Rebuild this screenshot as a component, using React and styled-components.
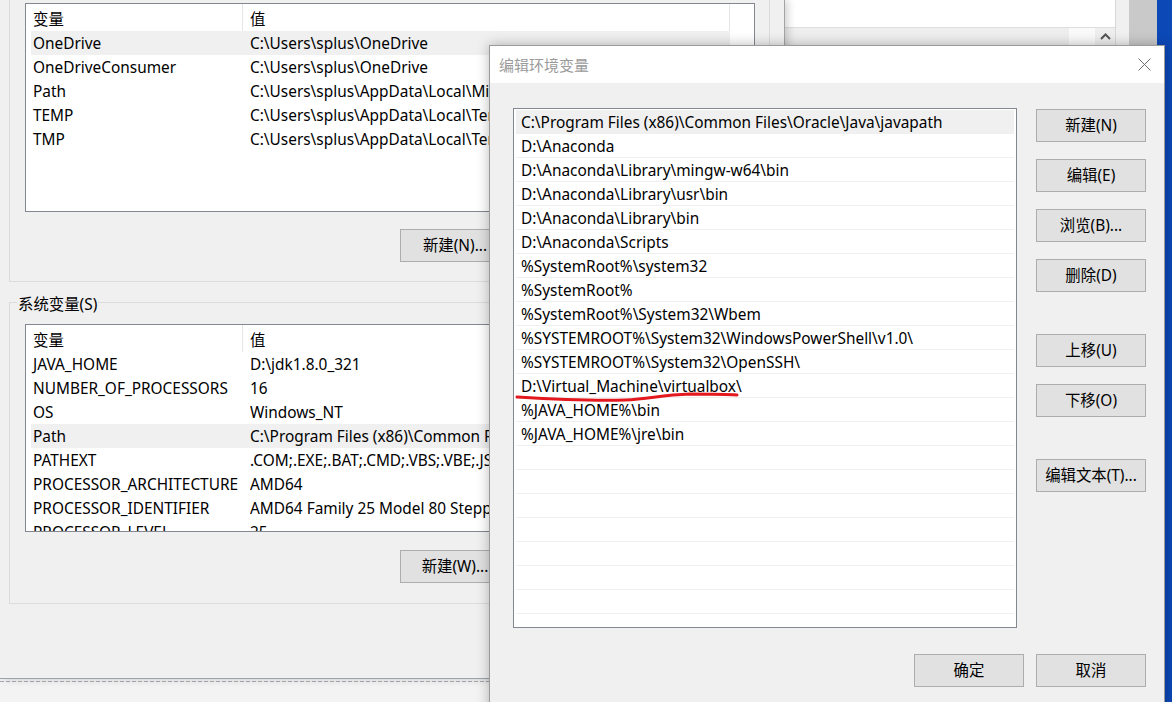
import React from "react";
import styled, { createGlobalStyle } from "styled-components";

const GlobalStyle = createGlobalStyle`
  html, body { margin: 0; padding: 0; }
  body {
    width: 1172px;
    height: 702px;
    overflow: hidden;
    font-family: "Noto Sans", "Noto Sans CJK SC", sans-serif;
    font-size: 15.4px;
    color: #000;
  }
  * { box-sizing: border-box; }
`;

const Desktop = styled.div`
  position: relative;
  width: 1172px;
  height: 702px;
  overflow: hidden;
  background: #0c48b6;
`;

/* window partly hidden behind the others, top right */
const BackWindow = styled.div`
  position: absolute;
  left: 785px;
  top: 0;
  width: 372px;
  height: 80px;
  display: flex;
`;

const BackPane = styled.div`
  flex: 1;
  display: flex;
  flex-direction: column;
  background: #fff;
`;

const BackStrip = styled.div`
  margin-top: 27px;
  height: 53px;
  background: #eeeeee;
  border-top: 1px solid #dedede;
  display: flex;
  justify-content: flex-end;
  align-items: flex-start;
`;

const ScrollCell = styled.div`
  width: 26px;
  height: 17px;
  background: #fafafa;
`;

const ScrollArrow = styled.div`
  width: 20px;
  height: 17px;
  display: flex;
  align-items: center;
  justify-content: center;
`;

const BackSide = styled.div`
  width: 14px;
  background: #f0f0f0;
  border-left: 1px solid #d7d7d7;
`;

const BackFrame = styled.div`
  width: 28px;
  background: #c9c9c9;
`;

const BelowStrip = styled.div`
  position: absolute;
  left: 0;
  top: 679px;
  width: 489px;
  height: 23px;
  background: #f3f3f3;
  &::before {
    content: "";
    display: block;
    margin-top: 2px;
    height: 1px;
    background: repeating-linear-gradient(90deg, #a9adb3 0 4px, transparent 4px 6px);
  }
`;

/* 环境变量 window behind */
const EnvWindow = styled.div`
  position: absolute;
  left: 0;
  top: 0;
  width: 785px;
  height: 679px;
  background: #f0f0f0;
  border-right: 1px solid #a3a3a3;
  border-bottom: 1px solid #9ca2aa;
  box-shadow: 3px 0 8px rgba(0, 0, 0, 0.18);
  padding: 0 14px 0 9px;
  display: flex;
  flex-direction: column;
`;

const UserGroup = styled.div`
  border: 1px solid #dcdcdc;
  border-top: none;
  padding: 3px 14px 19px 15px;
`;

const SystemGroup = styled.fieldset`
  margin: 7px 0 0;
  min-width: 0;
  border: 1px solid #dcdcdc;
  padding: 9px 14px 20px 15px;
`;

const Legend = styled.legend`
  padding: 6px 1px 0;
  margin-left: -8px;
  line-height: 20px;
`;

const VarList = styled.div`
  height: ${(p) => p.$height}px;
  background: #fff;
  border: 1px solid #828790;
  overflow: hidden;
`;

const VarHeader = styled.div`
  display: flex;
  height: 27px;
  align-items: stretch;
`;

const HeaderCell = styled.div`
  width: ${(p) => p.$width}px;
  padding: 1px 0 0 7px;
  border-right: 1px solid #e5e5e5;
  display: flex;
  align-items: center;
`;

const VarRow = styled.div`
  display: grid;
  grid-template-columns: 219px 1fr;
  width: 699px;
  margin-left: 5px;
  height: 24px;
  line-height: 24px;
  padding-top: 1px;
  background: ${(p) => (p.$active ? "#f0f0f0" : "transparent")};
  white-space: nowrap;
  overflow: hidden;
`;

const VarName = styled.span`
  padding-left: 2px;
  overflow: hidden;
`;

const VarValue = styled.span`
  overflow: hidden;
`;

/* only the first button of each row shows; the rest sit under the dialog */
const ButtonRow = styled.div`
  display: flex;
  justify-content: flex-end;
  margin-top: ${(p) => p.$top}px;
  padding-right: 245px;
`;

const WinButton = styled.button`
  width: 110px;
  height: 33px;
  padding: 0;
  background: #e1e1e1;
  border: 1px solid #adadad;
  border-radius: 0;
  font-family: inherit;
  font-size: 15.4px;
  color: #000;
  line-height: 1;
`;

/* 编辑环境变量 dialog */
const Dialog = styled.div`
  position: absolute;
  left: 489px;
  top: 45px;
  width: 676px;
  height: 700px;
  background: #f0f0f0;
  border: 1px solid #9a9a9a;
  box-shadow: 0 0 12px rgba(0, 0, 0, 0.28);
  display: flex;
  flex-direction: column;
`;

const TitleBar = styled.div`
  height: 37px;
  background: #fff;
  display: flex;
  align-items: center;
  justify-content: space-between;
  padding-left: 9px;
`;

const Title = styled.span`
  color: #9b9b9b;
  font-size: 15px;
`;

const CloseBox = styled.div`
  width: 40px;
  height: 37px;
  display: flex;
  align-items: center;
  justify-content: center;
`;

const DialogBody = styled.div`
  padding: 25px 18px 0 23px;
  display: grid;
  grid-template-columns: 504px 110px;
  column-gap: 19px;
`;

const PathList = styled.div`
  height: 520px;
  background: #fff;
  border: 1px solid #828790;
  padding: 1px 2px 0;
  overflow: hidden;
`;

const PathRow = styled.div`
  height: 24px;
  line-height: 23px;
  padding: 1px 0 0 5px;
  border-bottom: 1px solid #efefef;
  background: ${(p) => (p.$active ? "#f0f0f0" : "#fff")};
  white-space: nowrap;
`;

const SideButtons = styled.div`
  display: flex;
  flex-direction: column;
  gap: 17px;
  padding-top: 1px;
`;

const SideButton = styled(WinButton)`
  margin-top: ${(p) => (p.$apart ? 25 : 0)}px;
`;

const Footer = styled.div`
  grid-column: 1 / span 2;
  display: flex;
  justify-content: flex-end;
  gap: 12px;
  margin-top: 26px;
`;

const Annotation = styled.svg`
  position: absolute;
  left: 0;
  top: 0;
  pointer-events: none;
`;

const userVars = [
  ["OneDrive", "C:\\Users\\splus\\OneDrive"],
  ["OneDriveConsumer", "C:\\Users\\splus\\OneDrive"],
  ["Path", "C:\\Users\\splus\\AppData\\Local\\Microsoft\\WindowsApps;"],
  ["TEMP", "C:\\Users\\splus\\AppData\\Local\\Temp"],
  ["TMP", "C:\\Users\\splus\\AppData\\Local\\Temp"],
];

const systemVars = [
  ["JAVA_HOME", "D:\\jdk1.8.0_321"],
  ["NUMBER_OF_PROCESSORS", "16"],
  ["OS", "Windows_NT"],
  ["Path", "C:\\Program Files (x86)\\Common Files\\Oracle\\Java\\javapath;D:\\Anaconda"],
  ["PATHEXT", ".COM;.EXE;.BAT;.CMD;.VBS;.VBE;.JS;.JSE;.WSF;.WSH;.MSC"],
  ["PROCESSOR_ARCHITECTURE", "AMD64"],
  ["PROCESSOR_IDENTIFIER", "AMD64 Family 25 Model 80 Stepping 0, AuthenticAMD"],
  ["PROCESSOR_LEVEL", "25"],
];

const paths = [
  "C:\\Program Files (x86)\\Common Files\\Oracle\\Java\\javapath",
  "D:\\Anaconda",
  "D:\\Anaconda\\Library\\mingw-w64\\bin",
  "D:\\Anaconda\\Library\\usr\\bin",
  "D:\\Anaconda\\Library\\bin",
  "D:\\Anaconda\\Scripts",
  "%SystemRoot%\\system32",
  "%SystemRoot%",
  "%SystemRoot%\\System32\\Wbem",
  "%SYSTEMROOT%\\System32\\WindowsPowerShell\\v1.0\\",
  "%SYSTEMROOT%\\System32\\OpenSSH\\",
  "D:\\Virtual_Machine\\virtualbox\\",
  "%JAVA_HOME%\\bin",
  "%JAVA_HOME%\\jre\\bin",
];

const sideButtons = [
  { label: "新建(N)" },
  { label: "编辑(E)" },
  { label: "浏览(B)..." },
  { label: "删除(D)" },
  { label: "上移(U)", apart: true },
  { label: "下移(O)" },
  { label: "编辑文本(T)...", apart: true },
];

function VariableTable({ rows, height, activeIndex }) {
  return (
    <VarList $height={height}>
      <VarHeader>
        <HeaderCell $width={217}>变量</HeaderCell>
        <HeaderCell $width={487}>值</HeaderCell>
      </VarHeader>
      {rows.map(([name, value], i) => (
        <VarRow key={name} $active={i === activeIndex}>
          <VarName>{name}</VarName>
          <VarValue>{value}</VarValue>
        </VarRow>
      ))}
    </VarList>
  );
}

export default function App() {
  const filler = Array.from({ length: 8 }, (_, i) => i);

  return (
    <>
      <GlobalStyle />
      <Desktop>
        <BackWindow>
          <BackPane>
            <BackStrip>
              <ScrollCell />
              <ScrollArrow>
                <svg width="11" height="7" viewBox="0 0 11 7">
                  <path d="M1 6 L5.5 1.5 L10 6" fill="none" stroke="#555" strokeWidth="2" />
                </svg>
              </ScrollArrow>
            </BackStrip>
          </BackPane>
          <BackSide />
          <BackFrame />
        </BackWindow>

        <BelowStrip />

        <EnvWindow>
          <UserGroup>
            <VariableTable rows={userVars} height={209} activeIndex={0} />
            <ButtonRow $top={17}>
              <WinButton>新建(N)...</WinButton>
            </ButtonRow>
          </UserGroup>

          <SystemGroup>
            <Legend>系统变量(S)</Legend>
            <VariableTable rows={systemVars} height={208} activeIndex={3} />
            <ButtonRow $top={18}>
              <WinButton>新建(W)...</WinButton>
            </ButtonRow>
          </SystemGroup>
        </EnvWindow>

        <Dialog>
          <TitleBar>
            <Title>编辑环境变量</Title>
            <CloseBox>
              <svg width="13" height="13" viewBox="0 0 13 13">
                <path d="M0.5 0.5 L12.5 12.5 M12.5 0.5 L0.5 12.5" stroke="#6d6d6d" strokeWidth="1" />
              </svg>
            </CloseBox>
          </TitleBar>

          <DialogBody>
            <PathList>
              {paths.map((p, i) => (
                <PathRow key={p} $active={i === 0}>{p}</PathRow>
              ))}
              {filler.map((i) => (
                <PathRow key={"empty" + i} />
              ))}
            </PathList>

            <SideButtons>
              {sideButtons.map((b) => (
                <SideButton key={b.label} $apart={b.apart}>{b.label}</SideButton>
              ))}
            </SideButtons>

            <Footer>
              <WinButton>确定</WinButton>
              <WinButton>取消</WinButton>
            </Footer>
          </DialogBody>
        </Dialog>

        <Annotation width="1172" height="702" viewBox="0 0 1172 702">
          <path
            d="M517 397 C 550 399, 590 401, 625 400 C 650 399, 660 395, 690 394 C 710 394, 725 394, 737 395"
            fill="none"
            stroke="#e3191f"
            strokeWidth="3"
            strokeLinecap="round"
          />
        </Annotation>
      </Desktop>
    </>
  );
}
